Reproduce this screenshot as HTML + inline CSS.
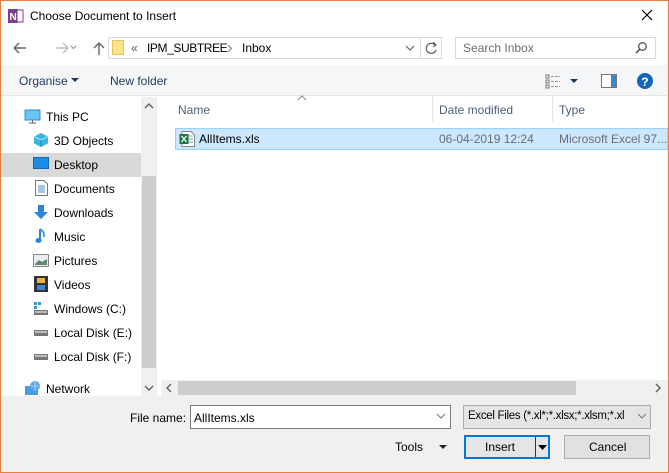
<!DOCTYPE html>
<html><head><meta charset="utf-8">
<style>
*{box-sizing:border-box;margin:0;padding:0}
body{width:669px;height:473px;overflow:hidden;font-family:"Liberation Sans",sans-serif;font-size:12px;color:#000;background:#fff;position:relative}
.a{position:absolute}
.win{left:0;top:0;width:669px;height:473px;border:1px solid #e8803a;border-top-color:#e8803a}
.t{white-space:nowrap}
.nav .t{font-size:12px}
</style></head><body>
<div class="a" style="left:0;top:0;width:669px;height:396px;background:#fff"></div>
<!-- title -->
<svg class="a" style="left:8px;top:8px" width="16" height="16"><rect x="0" y="1" width="10" height="14" fill="#7b3e8f"/><rect x="9" y="2" width="6" height="12" fill="#fff" stroke="#7b3e8f"/><text x="1.5" y="12" font-size="10" fill="#fff" font-family="Liberation Sans" font-weight="bold">N</text></svg>
<div class="a t" style="left:30px;top:9px;font-size:12px">Choose Document to Insert</div>
<svg class="a" style="left:641px;top:9px" width="12" height="12"><path d="M1 1L11 11M11 1L1 11" stroke="#000" stroke-width="1.2"/></svg>
<!-- nav arrows -->
<svg class="a" style="left:12px;top:40px" width="100" height="16"><path d="M2 8H14M2 8L7 3M2 8L7 13" stroke="#666" stroke-width="1.4" fill="none"/><path d="M44 8H56M56 8L51 3M56 8L51 13" stroke="#bbb" stroke-width="1.4" fill="none"/><path d="M59 6L61.5 8.5L64 6" stroke="#888" fill="none"/><path d="M82 8L87 3L92 8M87 3V15" stroke="#666" stroke-width="1.4" fill="none"/></svg>
<div class="a" style="left:108px;top:37px;width:334px;height:22px;border:1px solid #d9d9d9"></div>
<div class="a" style="left:420px;top:37px;width:1px;height:22px;background:#d9d9d9"></div>
<div class="a" style="left:112px;top:40px;width:12px;height:15px;background:#fde38a;border:1px solid #e5c365"></div>
<div class="a t" style="left:131px;top:41px;color:#555">«</div>
<div class="a t" style="left:147px;top:41px;letter-spacing:-0.4px">IPM_SUBTREE</div>
<svg class="a" style="left:227px;top:44px" width="6" height="9"><path d="M1 1L4.5 4.5L1 8" stroke="#777" fill="none"/></svg>
<div class="a t" style="left:242px;top:41px">Inbox</div>
<svg class="a" style="left:405px;top:44px" width="10" height="8"><path d="M1 2L5 6L9 2" stroke="#555" fill="none"/></svg>
<svg class="a" style="left:425px;top:41px" width="14" height="14"><path d="M10 4A5 5 0 1 0 11 9" stroke="#666" stroke-width="1.3" fill="none"/><path d="M8 1L11 4L8 6" stroke="#666" stroke-width="1.3" fill="none"/></svg>
<div class="a" style="left:455px;top:37px;width:201px;height:22px;border:1px solid #d9d9d9"></div>
<div class="a t" style="left:463px;top:41px;color:#6d6d6d">Search Inbox</div>
<svg class="a" style="left:634px;top:41px" width="14" height="14"><circle cx="8.5" cy="5.5" r="3.8" stroke="#555" stroke-width="1.3" fill="none"/><path d="M6 8L2 12" stroke="#555" stroke-width="1.6"/></svg>
<!-- command bar -->
<div class="a" style="left:1px;top:65px;width:667px;height:31px;background:#f5f6f7;border-bottom:1px solid #e5e5e5"></div>
<div class="a t" style="left:19px;top:74px;color:#1e395b">Organise</div>
<svg class="a" style="left:71px;top:78px" width="8" height="5"><path d="M0 0H8L4 4Z" fill="#1e395b"/></svg>
<div class="a t" style="left:110px;top:74px;color:#1e395b">New folder</div>
<svg class="a" style="left:545px;top:73px" width="40" height="16"><g fill="none" stroke="#777"><rect x="1" y="2" width="3" height="3"/><rect x="1" y="7" width="3" height="3"/><rect x="1" y="12" width="3" height="3"/></g><path d="M6 3.5h9M6 8.5h9M6 13.5h9" stroke="#999" stroke-dasharray="3 1"/><path d="M25 6H33L29 10Z" fill="#1e395b"/></svg>
<svg class="a" style="left:601px;top:74px" width="16" height="14"><rect x="0.5" y="0.5" width="15" height="13" fill="#fff" stroke="#777"/><rect x="10" y="1" width="5" height="12" fill="#3a86d0"/></svg>
<svg class="a" style="left:637px;top:73px" width="16" height="16"><circle cx="8" cy="8" r="8" fill="#1565b7"/><text x="4.3" y="13" font-size="12" font-weight="bold" fill="#fff" font-family="Liberation Sans">?</text></svg>
<!-- nav pane -->
<div class="a" style="left:141px;top:97px;width:16px;height:299px;background:#f0f0f0"></div>
<div class="a" style="left:142px;top:176px;width:14px;height:192px;background:#cdcdcd"></div>
<svg class="a" style="left:144px;top:102px" width="10" height="8"><path d="M1 6L5 2L9 6" stroke="#606060" stroke-width="1.4" fill="none"/></svg>
<svg class="a" style="left:144px;top:384px" width="10" height="8"><path d="M1 2L5 6L9 2" stroke="#606060" stroke-width="1.4" fill="none"/></svg>
<div class="a" style="left:1px;top:153px;width:140px;height:24px;background:#d9d9d9"></div>
<div class="nav">
<svg class="a" style="left:24px;top:109px" width="17" height="15"><rect x="1" y="1" width="15" height="10" fill="#6cc3f2" stroke="#2a8fd6"/><path d="M5 14H12M8.5 11V14" stroke="#666"/></svg>
<div class="a t" style="left:46px;top:110px">This PC</div>
<svg class="a" style="left:33px;top:132px" width="16" height="16"><path d="M8 1L15 4.5V11.5L8 15L1 11.5V4.5Z" fill="#3bb4e0"/><path d="M1 4.5L8 8L15 4.5" stroke="#a8e4fa" fill="none"/><path d="M8 8V15" stroke="#1d86b9"/></svg>
<div class="a t" style="left:54px;top:134px">3D Objects</div>
<svg class="a" style="left:33px;top:157px" width="16" height="13"><rect x="0.5" y="0.5" width="15" height="11" fill="#1b8ee6" stroke="#0f6cbd"/></svg>
<div class="a t" style="left:54px;top:158px">Desktop</div>
<svg class="a" style="left:35px;top:180px" width="13" height="16"><path d="M0.5 0.5H9L12.5 4V15.5H0.5Z" fill="#fff" stroke="#777"/><path d="M3 6h7M3 8h7M3 10h7M3 12h7" stroke="#4a8ad0"/></svg>
<div class="a t" style="left:54px;top:182px">Documents</div>
<svg class="a" style="left:33px;top:204px" width="16" height="16"><path d="M5 1H11V8H15L8 15L1 8H5Z" fill="#2b84d8"/></svg>
<div class="a t" style="left:54px;top:206px">Downloads</div>
<svg class="a" style="left:35px;top:228px" width="12" height="16"><path d="M5 1V12" stroke="#2b84d8" stroke-width="2"/><ellipse cx="3.5" cy="12.5" rx="3" ry="2.5" fill="#2b84d8"/><path d="M5 1Q10 4 9 9" stroke="#2b84d8" stroke-width="1.6" fill="none"/></svg>
<div class="a t" style="left:54px;top:230px">Music</div>
<svg class="a" style="left:33px;top:254px" width="16" height="13"><rect x="0.5" y="0.5" width="15" height="12" fill="#e8eef2" stroke="#888"/><path d="M2 10L6 6L9 8L14 5V11H2Z" fill="#5e8a6a"/></svg>
<div class="a t" style="left:54px;top:254px">Pictures</div>
<svg class="a" style="left:34px;top:276px" width="14" height="16"><rect x="0" y="0" width="14" height="16" fill="#333"/><rect x="3" y="2" width="8" height="5" fill="#e8b440"/><rect x="3" y="9" width="8" height="5" fill="#3a86d0"/></svg>
<div class="a t" style="left:54px;top:278px">Videos</div>
<svg class="a" style="left:33px;top:301px" width="16" height="15"><rect x="1" y="1" width="3" height="3" fill="#2b9be0"/><rect x="5" y="1" width="3" height="3" fill="#2b9be0"/><rect x="1" y="5" width="3" height="3" fill="#2b9be0"/><rect x="1" y="9" width="14" height="5" fill="#777"/><rect x="2" y="10" width="12" height="2" fill="#bbb"/></svg>
<div class="a t" style="left:54px;top:302px">Windows (C:)</div>
<svg class="a" style="left:33px;top:327px" width="16" height="10"><rect x="1" y="3" width="14" height="6" fill="#777"/><rect x="2" y="4" width="12" height="2" fill="#bbb"/></svg>
<div class="a t" style="left:54px;top:326px">Local Disk (E:)</div>
<svg class="a" style="left:33px;top:351px" width="16" height="10"><rect x="1" y="3" width="14" height="6" fill="#777"/><rect x="2" y="4" width="12" height="2" fill="#bbb"/></svg>
<div class="a t" style="left:54px;top:350px">Local Disk (F:)</div>
<svg class="a" style="left:24px;top:380px" width="18" height="16"><rect x="1" y="6" width="13" height="9" fill="#4a9ae0"/><circle cx="11" cy="6" r="5" fill="#5aa6e8"/><path d="M7 6h8M11 1v10" stroke="#bfe0fa" stroke-width="0.8"/></svg>
<div class="a t" style="left:46px;top:382px">Network</div>
</div>
<!-- content -->
<svg class="a" style="left:297px;top:95px" width="10" height="6"><path d="M1 5L5 1L9 5" stroke="#888" fill="none"/></svg>
<div class="a t" style="left:178px;top:103px;color:#4c607a">Name</div>
<div class="a" style="left:432px;top:97px;width:1px;height:25px;background:#e5e5e5"></div>
<div class="a t" style="left:439px;top:103px;color:#4c607a">Date modified</div>
<div class="a" style="left:552px;top:97px;width:1px;height:25px;background:#e5e5e5"></div>
<div class="a t" style="left:559px;top:103px;color:#4c607a">Type</div>
<div class="a" style="left:175px;top:128px;width:493px;height:22px;background:#cce8ff;border:1px solid #99d1ff"></div>
<svg class="a" style="left:179px;top:131px" width="16" height="16"><path d="M3 0.5H12L15.5 4V15.5H3Z" fill="#fff" stroke="#888"/><path d="M8 5h6M8 8h6M8 11h6" stroke="#7aa"/><rect x="0.5" y="3" width="9" height="10" fill="#1f7346"/><path d="M2.5 5L7.5 11M7.5 5L2.5 11" stroke="#fff" stroke-width="1.3"/></svg>
<div class="a t" style="left:199px;top:132px">AllItems.xls</div>
<div class="a t" style="left:439px;top:132px;color:#6d6d6d">06-04-2019 12:24</div>
<div class="a t" style="left:559px;top:132px;color:#6d6d6d">Microsoft Excel 97...</div>
<!-- hscroll -->
<div class="a" style="left:161px;top:380px;width:507px;height:16px;background:#f0f0f0"></div>
<div class="a" style="left:178px;top:381px;width:398px;height:14px;background:#cdcdcd"></div>
<svg class="a" style="left:165px;top:383px" width="8" height="10"><path d="M6 1L2 5L6 9" stroke="#606060" stroke-width="1.4" fill="none"/></svg>
<svg class="a" style="left:654px;top:383px" width="8" height="10"><path d="M2 1L6 5L2 9" stroke="#606060" stroke-width="1.4" fill="none"/></svg>
<!-- bottom -->
<div class="a" style="left:0;top:396px;width:669px;height:77px;background:#f0f0f0"></div>
<div class="a t" style="left:130px;top:411px">File name:</div>
<div class="a" style="left:190px;top:405px;width:261px;height:24px;background:#fff;border:1px solid #7a7a7a"></div>
<div class="a t" style="left:194px;top:411px">AllItems.xls</div>
<svg class="a" style="left:436px;top:413px" width="10" height="7"><path d="M1 1L5 5L9 1" stroke="#777" fill="none"/></svg>
<div class="a" style="left:463px;top:405px;width:188px;height:24px;background:#e5e5e5;border:1px solid #adadad"></div>
<div class="a t" style="left:468px;top:410px;width:165px;overflow:hidden;font-size:11.5px;letter-spacing:-0.3px">Excel Files (*.xl*;*.xlsx;*.xlsm;*.xl</div>
<svg class="a" style="left:637px;top:413px" width="10" height="7"><path d="M1 1L5 5L9 1" stroke="#777" fill="none"/></svg>
<div class="a t" style="left:395px;top:440px">Tools</div>
<svg class="a" style="left:439px;top:445px" width="8" height="5"><path d="M0 0H8L4 4Z" fill="#222"/></svg>
<div class="a" style="left:464px;top:435px;width:86px;height:24px;background:#e5e5e5;border:2px solid #0078d7"></div>
<div class="a t" style="left:485px;top:440px">Insert</div>
<div class="a" style="left:535px;top:437px;width:1px;height:20px;background:#333"></div>
<svg class="a" style="left:538px;top:445px" width="9" height="5"><path d="M0 0H9L4.5 5Z" fill="#000"/></svg>
<div class="a" style="left:564px;top:435px;width:86px;height:24px;background:#e1e1e1;border:1px solid #adadad"></div>
<div class="a t" style="left:589px;top:440px">Cancel</div>
<div class="a win"></div>
</body></html>
